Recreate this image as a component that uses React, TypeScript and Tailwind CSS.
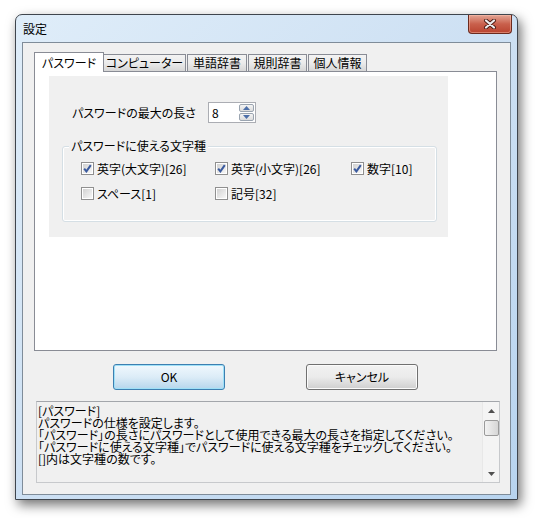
import React from "react"

const FONT = "font-['Noto_Sans_CJK_JP','Noto_Sans_CJK_SC',sans-serif] [font-feature-settings:'palt']"

function CheckBox({ checked }: { checked: boolean }) {
  return (
    <span className="flex h-[13px] w-[13px] shrink-0 border border-[#8f8f8f] bg-white p-px">
      <span className="relative flex h-full w-full items-center justify-center bg-gradient-to-br from-[#d2d2d2] to-[#f7f7f7]">
        {checked && (
          <svg width="9" height="9" viewBox="0 0 9 9">
            <path d="M1.2 4.6 L3.4 7.4 L7.8 1.2" fill="none" stroke="#3a5a9e" strokeWidth="2" />
          </svg>
        )}
      </span>
    </span>
  )
}

function CheckItem({ label, checked }: { label: string; checked: boolean }) {
  return (
    <div className="flex h-[13px] items-center gap-[3px]">
      <CheckBox checked={checked} />
      <span className="text-[12px] leading-[13px] text-black">{label}</span>
    </div>
  )
}

function Tab({ label, active, width }: { label: string; active?: boolean; width: string }) {
  return (
    <div
      className={
        active
          ? `relative z-10 -mb-px flex h-[20px] items-center justify-center border border-b-0 border-[#898c95] bg-white text-[12px] ${width}`
          : `flex h-[17px] items-center justify-center border border-b-0 border-[#898c95] bg-gradient-to-b from-[#f3f3f3] via-[#ebebeb] to-[#d6d6d6] text-[12px] ${width}`
      }
    >
      {label}
    </div>
  )
}

function Button({ label, primary }: { label: string; primary?: boolean }) {
  return (
    <button
      className={
        primary
          ? "flex h-[26px] w-[112px] items-center justify-center rounded-[3px] border border-[#3c7fb1] bg-gradient-to-b from-[#f0f8fd] via-[#dcecf7] to-[#b6d6ec] text-[12px] shadow-[inset_0_0_0_1px_#9fe0f7]"
          : "flex h-[26px] w-[112px] items-center justify-center rounded-[3px] border border-[#707070] bg-gradient-to-b from-[#f2f2f2] via-[#ebebeb] to-[#cfcfcf] text-[12px] shadow-[inset_0_0_0_1px_#fbfbfb]"
      }
    >
      {label}
    </button>
  )
}

export default function App() {
  return (
    <div className={`h-[518px] w-[537px] overflow-hidden bg-white pl-[15px] pt-[14px] text-black ${FONT}`}>
      {/* window frame */}
      <div className="flex h-[486px] w-[503px] flex-col rounded-t-[7px] border border-[#3f454d] bg-gradient-to-br from-[#dfedf9] via-[#cde0f3] to-[#b8d4ef] shadow-[3px_5px_12px_rgba(0,0,0,0.55)]">
        {/* title bar */}
        <div className="flex h-[27px] items-start justify-between">
          <span className="ml-[7px] self-center text-[12px] leading-none">設定</span>
          <div className="mr-[5px] flex h-[19px] w-[44px] items-center justify-center rounded-b-[4px] border border-t-0 border-[#6b2a1e] bg-gradient-to-b from-[#e3a595] via-[#c9604c] to-[#b9432f] shadow-[inset_0_0_0_1px_rgba(255,200,180,0.45)]">
            <svg width="14" height="10" viewBox="0 0 14 10">
              <path d="M3 1.5 L11 8.5 M11 1.5 L3 8.5" stroke="#4a1a12" strokeWidth="4" strokeLinecap="round" />
              <path d="M3 1.5 L11 8.5 M11 1.5 L3 8.5" stroke="#eeeeee" strokeWidth="2.2" strokeLinecap="round" />
            </svg>
          </div>
        </div>

        {/* client area */}
        <div className="mx-[6px] mb-[4px] flex h-[453px] flex-col border border-[#7f8c99] bg-[#f0f0f0]">
          {/* tab control */}
          <div className="ml-[11px] mt-[9px] w-[463px]">
            <div className="flex h-[19px] items-end">
              <Tab label="パスワード" active width="w-[70px]" />
              <Tab label="コンピューター" width="w-[82px] border-l-0" />
              <Tab label="単語辞書" width="ml-px w-[60px]" />
              <Tab label="規則辞書" width="ml-px w-[59px]" />
              <Tab label="個人情報" width="ml-px w-[59px]" />
            </div>
            <div className="h-[280px] border border-[#898c95] bg-white">
              <div className="ml-[14px] mt-[4px] h-[161px] w-[399px] bg-[#f0f0f0]">
                {/* max length */}
                <div className="flex items-center pl-[23px] pt-[26px]">
                  <span className="w-[136px] text-[12px]">パスワードの最大の長さ</span>
                  <div className="flex h-[21px] w-[48px] border border-[#abadb3] bg-white">
                    <span className="flex-1 pl-[3px] text-[12px] leading-[19px]">8</span>
                    <div className="flex w-[17px] flex-col gap-px p-px">
                      <div className="flex flex-1 items-center justify-center rounded-[2px] border border-[#9aa4b0] bg-gradient-to-b from-[#f4f4f4] to-[#dcdcdc]">
                        <svg width="7" height="4" viewBox="0 0 7 4"><path d="M0 4 L3.5 0 L7 4 Z" fill="#4d6fa8" /></svg>
                      </div>
                      <div className="flex flex-1 items-center justify-center rounded-[2px] border border-[#9aa4b0] bg-gradient-to-b from-[#f4f4f4] to-[#dcdcdc]">
                        <svg width="7" height="4" viewBox="0 0 7 4"><path d="M0 0 L7 0 L3.5 4 Z" fill="#4d6fa8" /></svg>
                      </div>
                    </div>
                  </div>
                </div>

                {/* group box */}
                <div className="relative ml-[13px] mt-[23px] h-[76px] w-[375px] rounded-[3px] border border-[#d5dfe5] shadow-[inset_0_0_0_1px_#ffffff]">
                  <span className="absolute -top-[8px] left-[6px] bg-[#f0f0f0] px-[2px] text-[12px] leading-[14px]">
                    パスワードに使える文字種
                  </span>
                  <div className="grid grid-cols-[134px_136px_1fr] gap-y-[12px] pl-[18px] pt-[15px]">
                    <CheckItem label="英字(大文字)[26]" checked />
                    <CheckItem label="英字(小文字)[26]" checked />
                    <CheckItem label="数字[10]" checked />
                    <CheckItem label="スペース[1]" checked={false} />
                    <CheckItem label="記号[32]" checked={false} />
                  </div>
                </div>
              </div>
            </div>
          </div>

          {/* buttons */}
          <div className="mt-[13px] flex gap-[81px] pl-[90px]">
            <Button label="OK" primary />
            <Button label="キャンセル" />
          </div>

          {/* help text */}
          <div className="ml-[13px] mt-[11px] flex h-[82px] w-[464px] border border-[#c7c9cc] border-t-[#a3a6ab] bg-[#f0f0f0]">
            <div className="flex-1 pl-px pt-[3px] text-[12px] leading-[12px] whitespace-nowrap">
              <div>[パスワード]</div>
              <div>パスワードの仕様を設定します。</div>
              <div>「パスワード」の長さにパスワードとして使用できる最大の長さを指定してください。</div>
              <div>「パスワードに使える文字種」でパスワードに使える文字種をチェックしてください。</div>
              <div>[]内は文字種の数です。</div>
            </div>
            <div className="flex w-[17px] flex-col items-center border-l border-[#e8e8e8] bg-[#f4f4f4]">
              <div className="flex h-[17px] items-center justify-center">
                <svg width="7" height="4" viewBox="0 0 7 4"><path d="M0 4 L3.5 0 L7 4 Z" fill="#505050" /></svg>
              </div>
              <div className="mt-[1px] h-[16px] w-[15px] rounded-[2px] border border-[#9a9a9a] bg-gradient-to-r from-[#f2f2f2] to-[#d6d6d6]" />
              <div className="flex-1" />
              <div className="flex h-[17px] items-center justify-center">
                <svg width="7" height="4" viewBox="0 0 7 4"><path d="M0 0 L7 0 L3.5 4 Z" fill="#505050" /></svg>
              </div>
            </div>
          </div>
        </div>
      </div>
    </div>
  )
}
